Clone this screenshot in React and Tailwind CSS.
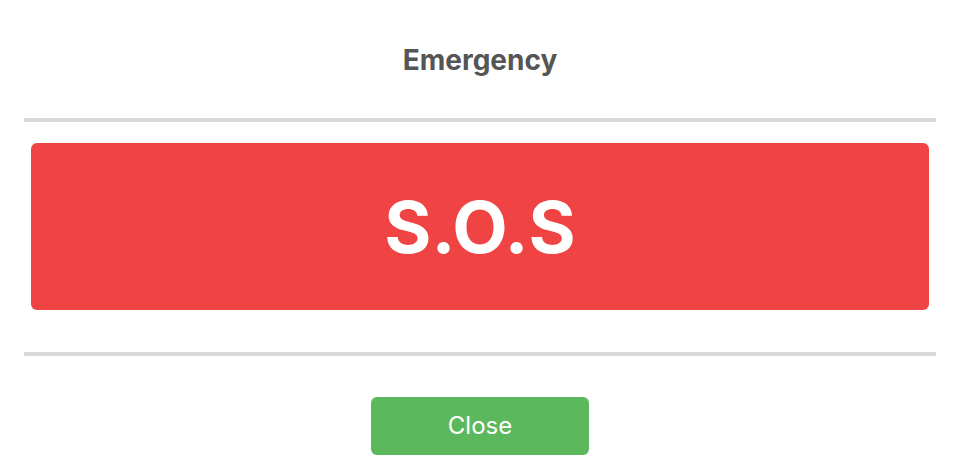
import React from "react";

const App = () => {
    return (
        <div className="w-full bg-white px-6 pt-[44px] font-['Inter','Liberation_Sans',sans-serif]">
            <h1 className="text-center text-[28px] leading-[32px] font-bold text-[#555555]">Emergency</h1>
            <div className="mt-[42px] h-[4px] bg-[#d9d9d9]" />
            <div className="mx-[7px] mt-[21px] h-[167px] rounded-md bg-[#f04343] flex items-center justify-center">
                <span className="text-[72px] leading-none font-bold text-white">S.O.S</span>
            </div>
            <div className="mt-[42px] h-[4px] bg-[#d9d9d9]" />
            <div className="flex justify-center mt-[41px]">
                <button type="button" className="w-[218px] h-[58px] rounded-md bg-[#5cb85c] text-white text-[24px]">Close</button>
            </div>
        </div>
    );
};

export default App;
